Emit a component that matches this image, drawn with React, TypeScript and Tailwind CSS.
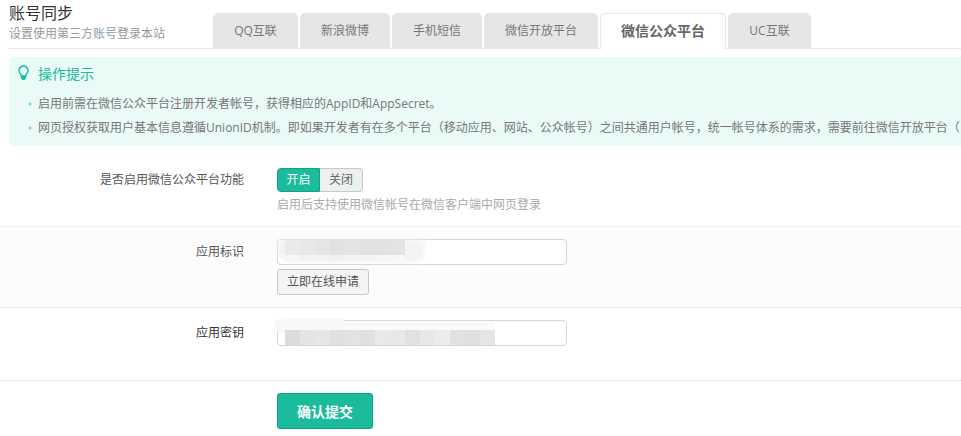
import React from 'react';

const tabs = ['QQ互联', '新浪微博', '手机短信', '微信开放平台', '微信公众平台', 'UC互联'];
const tabWidths = ['w-[85px]', 'w-[90px]', 'w-[90px]', 'w-[114px]', 'w-[126px]', 'w-[83px]'];

const tips = [
  '启用前需在微信公众平台注册开发者帐号，获得相应的AppID和AppSecret。',
  '网页授权获取用户基本信息遵循UnionID机制。即如果开发者有在多个平台（移动应用、网站、公众帐号）之间共通用户帐号，统一帐号体系的需求，需要前往微信开放平台（'
];

// mosaic colours of the blurred-out values
const idTop = ['bg-[#eaeaea]', 'bg-[#e8e8e8]', 'bg-[#e4e6e4]', 'bg-[#e1e3e3]', 'bg-[#e3e5e3]', 'bg-[#e0e1e1]', 'bg-[#e2e2e2]', 'bg-[#e4e4e4]'];
const idBottom = ['bg-[#f7f7f7]', 'bg-[#f3f3f3]', 'bg-[#f4f4f4]', 'bg-[#f1f1f1]', 'bg-[#f5f5f5]', 'bg-[#f3f3f3]', 'bg-[#f6f6f6]', 'bg-[#f8f8f8]'];
const secret = [
  'bg-[#dcdcde]', 'bg-[#e4e4e4]', 'bg-[#e8e6e4]', 'bg-[#dfe0e2]', 'bg-[#e4e3e2]', 'bg-[#dfe1e1]', 'bg-[#e9e9e9]',
  'bg-[#e8e8e8]', 'bg-[#e0e2e2]', 'bg-[#e8e8e8]', 'bg-[#ecedea]', 'bg-[#e0e1e1]', 'bg-[#dfe0e2]', 'bg-[#e5e5e5]'
];

const App: React.FC = () => {
  return (
    <div className="w-[961px] h-[436px] overflow-hidden bg-white text-[12px] font-['Open_Sans','Noto_Sans_CJK_SC',sans-serif]">
      {/* Header */}
      <div className="ml-[9px] h-[49px] flex border-b border-[#e6e6e6]">
        <div className="w-[204px] pt-[3px]">
          <h1 className="text-[16px] leading-[20px] text-[#333]">账号同步</h1>
          <p className="text-[12px] leading-[16px] mt-[3px] text-[#999]">
            设置使用第三方<span className="text-[#8a9bb0]">账号</span>登录本站
          </p>
        </div>
        <div className="flex gap-[2px] pt-[13px] h-[49px]">
          {tabs.map((tab, i) =>
            i === 4 ? (
              <div
                key={tab}
                className={`${tabWidths[i]} h-[36px] bg-white border border-b-0 border-[#e6e6e6] rounded-t-[5px] text-center leading-[34px] text-[14px] font-bold text-[#666]`}
              >
                {tab}
              </div>
            ) : (
              <div
                key={tab}
                className={`${tabWidths[i]} h-[35px] bg-[#e6e6e6] rounded-t-[5px] text-center leading-[35px] text-[12px] text-[#777]`}
              >
                {tab}
              </div>
            )
          )}
        </div>
      </div>

      {/* Tips */}
      <div className="ml-[9px] mt-[8px] h-[89px] bg-[#e9faf7] rounded-l-[5px] pl-[8px] pt-[7px]">
        <div className="flex items-center h-[18px] text-[#1abc9c] text-[14px]">
          <svg width="11" height="16" viewBox="0 0 11 16" className="ml-[1px] mr-[9px]">
            <path d="M5.5 1a4.5 4.5 0 0 0-2.5 8.2V11h5V9.2A4.5 4.5 0 0 0 5.5 1z" fill="none" stroke="#1abc9c" strokeWidth="1.4" />
            <path d="M3 11h5v2.5L6.5 15h-2L3 13.5z" fill="#1abc9c" />
          </svg>
          操作提示
        </div>
        <ul className="mt-[10px] text-[#777]">
          {tips.map(tip => (
            <li key={tip} className="flex items-center h-[24px] whitespace-nowrap">
              <span className="ml-[12px] mr-[6px] w-0 h-0 shrink-0 border-y-[2px] border-y-transparent border-l-[3px] border-l-[#6fd6c2]" />
              {tip}
            </li>
          ))}
        </ul>
      </div>

      {/* Switch row */}
      <div className="flex h-[81px] border-b border-[#eee] pt-[22px]">
        <label className="w-[244px] text-right leading-[24px] text-[#555]">是否启用微信公众平台功能</label>
        <div className="ml-[33px]">
          <div className="flex h-[24px] w-[86px] leading-[22px]">
            <span className="w-[43px] text-center bg-[#1abc9c] border border-[#16a085] rounded-l-[4px] text-white">开启</span>
            <span className="w-[43px] text-center bg-[#ecf0f1] border border-l-0 border-[#c8c8c8] rounded-r-[4px] text-[#666]">关闭</span>
          </div>
          <p className="mt-[5px] leading-[16px] text-[#aaa]">启用后支持使用微信帐号在微信客户端中网页登录</p>
        </div>
      </div>

      {/* AppID row */}
      <div className="flex h-[81px] bg-[#fcfcfc] border-b border-dotted border-[#d8d8d8] pt-[12px]">
        <label className="w-[244px] text-right leading-[26px] text-[#555]">应用标识</label>
        <div className="ml-[33px]">
          <div className="relative w-[290px] h-[26px] bg-white border border-[#d5d5d5] rounded-[4px]">
            <div className="absolute left-[0px] top-[0px] w-[147px] h-[22px] bg-[#f3f3f3] rounded-b-[12px] blur-[2px]" />
            <div className="absolute left-[7px] top-[0px] flex">
              {idTop.map((c, i) => (
                <div key={i} className={`w-[15px] h-[15px] ${c}`} />
              ))}
            </div>
            <div className="absolute left-[7px] top-[15px] flex">
              {idBottom.map((c, i) => (
                <div key={i} className={`w-[15px] h-[6px] ${c}`} />
              ))}
            </div>
          </div>
          <button className="block mt-[4px] w-[92px] h-[26px] bg-[#f4f4f4] border border-[#c8c8c8] rounded-[3px] text-[#555] text-[12px]">
            立即在线申请
          </button>
        </div>
      </div>

      {/* AppSecret row */}
      <div className="flex h-[73px] border-b border-dotted border-[#d8d8d8] pt-[12px]">
        <label className="w-[244px] text-right leading-[26px] text-[#333]">应用密钥</label>
        <div className="ml-[33px]">
          <div className="relative w-[290px] h-[26px] bg-white border border-[#d5d5d5] rounded-[4px]">
            <div className="absolute left-[-4px] top-[-3px] w-[70px] h-[15px] bg-[#f8f8f7] rounded-l-[8px]" />
            <div className="absolute left-[66px] top-[2px] w-[150px] h-[7px] bg-[#fafafa]" />
            <div className="absolute left-[7px] top-[9px] flex">
              {secret.map((c, i) => (
                <div key={i} className={`w-[15px] h-[15px] ${c}`} />
              ))}
            </div>
          </div>
        </div>
      </div>

      {/* Submit */}
      <div className="pl-[277px] pt-[12px]">
        <button className="w-[96px] h-[36px] bg-[#1abc9c] border border-[#16a085] rounded-[3px] text-white text-[14px] font-bold">
          确认提交
        </button>
      </div>
    </div>
  );
};

export default App;
